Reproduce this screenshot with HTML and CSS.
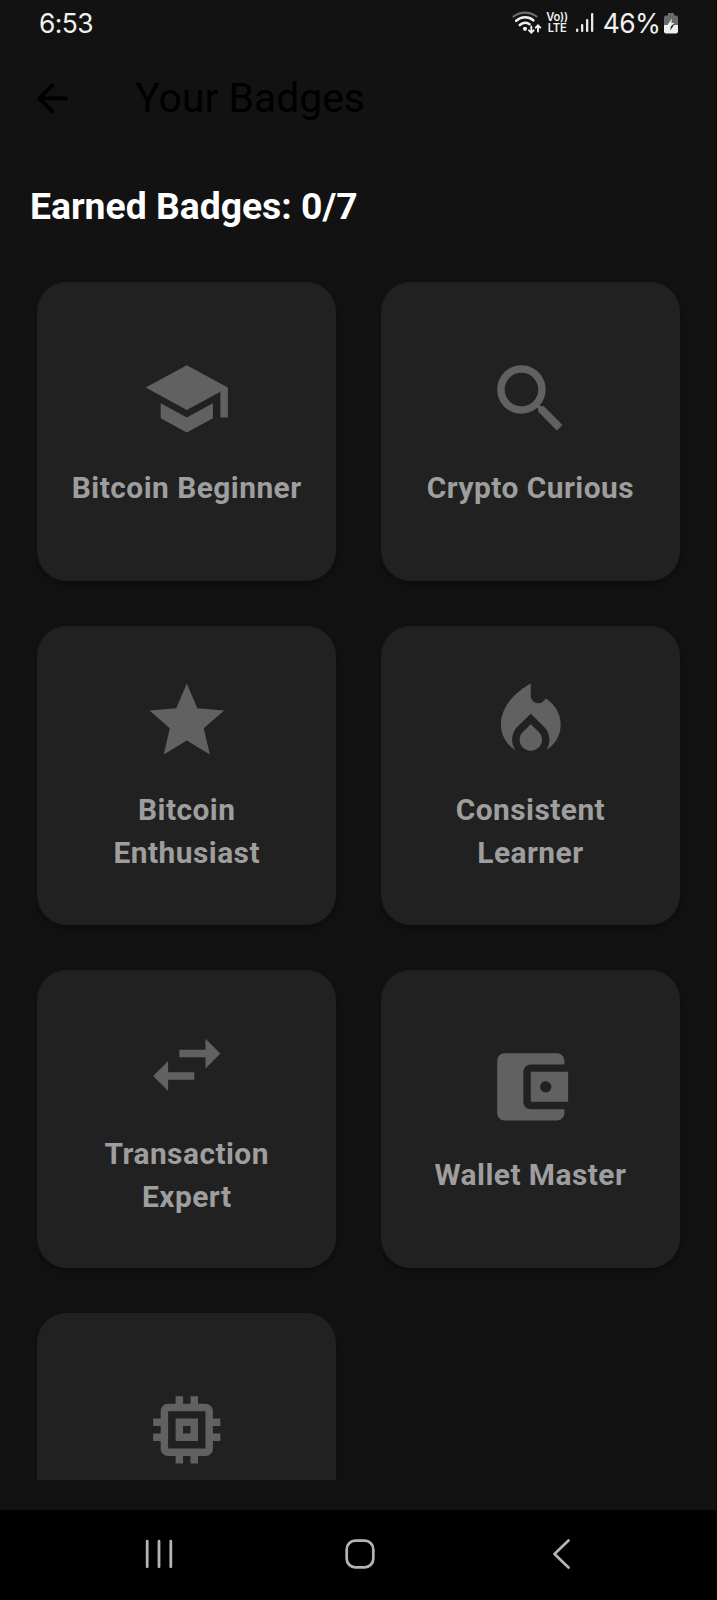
FILE: index.html
```html
<!DOCTYPE html>
<html lang="en">
<head>
<meta charset="utf-8">
<title>Your Badges</title>
<link rel="stylesheet" href="styles.css">
</head>
<body>
<div class="screen">
  <div class="status">
    <span class="clock">6:53</span>
    <div class="indicators">
      <svg class="wifi" width="30" height="24" viewBox="0 0 30 24" fill="none" stroke-linecap="round">
        <path d="M1.500 5.500C8 .2 18 .2 24.500 5.500" stroke="#6e6e6e" stroke-width="2.200"/>
        <path d="M4.200 9.800C9.500 5.200 16.500 5.200 21.300 9.300" stroke="#eee" stroke-width="2.600"/>
        <path d="M7.800 14C11 11.200 15 11.200 17.500 13.200" stroke="#eee" stroke-width="2.600"/>
        <circle cx="13" cy="17.800" r="2.100" fill="#eee"/>
        <path d="M19.300 15.500v6M17 19.300l2.300 2.300 2.300-2.300M26 20.500v-6M23.700 16.700l2.300-2.300 2.300 2.300" stroke="#eee" stroke-width="1.900"/>
      </svg>
      <div class="volte"><span>Vo))</span><span>LTE</span></div>
      <svg class="signal" width="20" height="20" viewBox="0 0 20 20" fill="#e8e8e8">
        <rect x="1" y="15.500" width="2.300" height="3.500" rx="1"/>
        <rect x="6" y="11" width="2.300" height="8" rx="1"/>
        <rect x="11" y="6" width="2.300" height="13" rx="1"/>
        <rect x="16" y="0" width="2.300" height="19" rx="1"/>
      </svg>
      <span class="percent">46%</span>
      <svg class="battery" width="14" height="21" viewBox="0 0 14 21">
        <path d="M4 0h6v2.500h2a2 2 0 0 1 2 2V12H0V4.500a2 2 0 0 1 2-2h2z" fill="#6a6a6a"/>
        <path d="M0 12h14v6.500a2 2 0 0 1-2 2H2a2 2 0 0 1-2-2z" fill="#efefef"/>
        <path d="M8 5.500 3.500 12H7z" fill="#efefef"/>
        <path d="M10.500 11.200 6.200 17.500 7 12.700z" fill="#222"/>
        <path d="M7 10h3.500L7 13z" fill="#efefef"/>
      </svg>
    </div>
  </div>

  <header class="appbar">
    <svg class="back" viewBox="0 0 24 24" fill="none" stroke="#000" stroke-width="2" stroke-linecap="round" stroke-linejoin="round"><path d="M19.300 12H5M12 5 5 12l7 7"/></svg>
    <h1 class="title">Your Badges</h1>
  </header>

  <main class="content">
    <h2 class="earned">Earned Badges: 0/7</h2>
    <div class="grid">
      <div class="card">
        <svg class="icon" viewBox="0 0 24 24"><path d="M5 13.180v4L12 21l7-3.820v-4L12 17l-7-3.820zM12 3 1 9l11 6 9-4.910V17h2V9L12 3z"/></svg>
        <div class="label">Bitcoin Beginner</div>
      </div>
      <div class="card">
        <svg class="icon" viewBox="0 0 24 24"><path d="M15.500 14h-.79l-.28-.27C15.410 12.590 16 11.110 16 9.500 16 5.910 13.090 3 9.500 3S3 5.910 3 9.500 5.910 16 9.500 16c1.610 0 3.090-.59 4.230-1.570l.27.28v.79l5 4.990L20.490 19l-4.990-5zm-6 0C7.010 14 5 11.990 5 9.500S7.010 5 9.500 5 14 7.010 14 9.500 11.990 14 9.500 14z"/></svg>
        <div class="label">Crypto Curious</div>
      </div>
      <div class="card">
        <svg class="icon" viewBox="0 0 24 24"><path d="M12 17.270 18.180 21l-1.640-7.030L22 9.240l-7.190-.61L12 2 9.190 8.630 2 9.240l5.460 4.730L5.820 21z"/></svg>
        <div class="label">Bitcoin<br>Enthusiast</div>
      </div>
      <div class="card">
        <svg class="icon" viewBox="0 0 24 24"><path d="M12 12.900l-2.130 2.090C9.310 15.550 9 16.280 9 17.060 9 18.680 10.350 20 12 20s3-1.320 3-2.940c0-.78-.31-1.520-.87-2.070L12 12.900z"/><path d="M16 6l-.44.55C14.380 8.020 12 7.190 12 5.300V2S4 6 4 13c0 2.920 1.560 5.470 3.890 6.860-.56-.79-.89-1.760-.89-2.800 0-1.320.52-2.560 1.470-3.500L12 10.100l3.530 3.470c.95.93 1.470 2.170 1.470 3.500 0 1.020-.31 1.960-.85 2.750 1.890-1.150 3.290-3.060 3.710-5.300.66-3.550-1.070-6.900-3.860-8.520z"/></svg>
        <div class="label">Consistent<br>Learner</div>
      </div>
      <div class="card">
        <svg class="icon" viewBox="0 0 24 24"><path d="M6.990 11 3 15l3.990 4v-3H14v-2H6.990v-3zM21 9l-3.990-4v3H10v2h7.010v3L21 9z"/></svg>
        <div class="label">Transaction<br>Expert</div>
      </div>
      <div class="card">
        <svg class="icon" viewBox="0 0 24 24"><path d="M21 18v1c0 1.100-.9 2-2 2H5c-1.110 0-2-.9-2-2V5c0-1.100.89-2 2-2h14c1.100 0 2 .9 2 2v1h-9c-1.110 0-2 .9-2 2v8c0 1.100.89 2 2 2h9zm-9-2h10V8H12v8zm4-2.500c-.83 0-1.500-.67-1.500-1.500s.67-1.500 1.500-1.500 1.500.67 1.500 1.500-.67 1.500-1.500 1.500z"/></svg>
        <div class="label">Wallet Master</div>
      </div>
      <div class="card">
        <svg class="icon" viewBox="0 0 24 24"><path d="M15 9H9v6h6V9zm-2 4h-2v-2h2v2zm8-2V9h-2V7c0-1.100-.9-2-2-2h-2V3h-2v2h-2V3H9v2H7c-1.100 0-2 .9-2 2v2H3v2h2v2H3v2h2v2c0 1.100.9 2 2 2h2v2h2v-2h2v2h2v-2h2c1.100 0 2-.9 2-2v-2h2v-2h-2v-2h2zm-4 6H7V7h10v10z"/></svg>
        <div class="label"></div>
      </div>
    </div>
  </main>

  <nav class="navbar">
    <svg width="30" height="30" viewBox="0 0 30 30" stroke="#b4b4b4" stroke-width="2.800" stroke-linecap="round"><path d="M3.200 2.200v25.600M15 2.200v25.600M26.800 2.200v25.600"/></svg>
    <svg width="30" height="30" viewBox="0 0 30 30" fill="none" stroke="#b4b4b4" stroke-width="2.700"><rect x="1.700" y="1.700" width="26.600" height="26.600" rx="8.500"/></svg>
    <svg width="30" height="30" viewBox="0 0 30 30" fill="none" stroke="#b4b4b4" stroke-width="2.700" stroke-linecap="round" stroke-linejoin="round"><path d="M23.500 1.500 9.500 15l14 13.500"/></svg>
  </nav>
</div>
</body>
</html>
```
FILE: styles.css
```css
* { box-sizing: border-box; margin: 0; padding: 0; }

body {
  background: #121212;
  font-family: Roboto, "Liberation Sans", sans-serif;
}

svg { display: block; flex: none; }

.screen {
  width: 717px;
  height: 1600px;
  display: flex;
  flex-direction: column;
  overflow: hidden;
  background: #121212;
  border-right: 1px solid #060606;
}

.status {
  height: 46px;
  flex: none;
  display: flex;
  align-items: center;
  justify-content: space-between;
  padding: 0 38px 0 39px;
  font-family: Inter, Roboto, sans-serif;
  color: #f0f0f0;
}

.clock { font-size: 26.400px; line-height: 32px; letter-spacing: -0.600px; }

.indicators { display: flex; align-items: center; }

.volte {
  display: flex;
  flex-direction: column;
  align-items: center;
  width: 21px;
  margin-left: 5px;
  font-size: 11.200px;
  font-weight: 600;
  line-height: 11.500px;
  letter-spacing: -0.200px;
}

.signal { margin-left: 7px; }
.percent { margin-left: 8px; font-size: 26.400px; line-height: 32px; letter-spacing: -0.500px; }
.battery { margin-left: 3.500px; }

.appbar {
  height: 104.500px;
  flex: none;
  display: flex;
  align-items: center;
  gap: 60.500px;
  padding-left: 30px;
}

.back { width: 44.800px; height: 44.800px; }

.title {
  font-size: 40.900px;
  font-weight: 400;
  line-height: 52px;
  color: #000;
}

.content {
  height: 1329.500px;
  flex: none;
  padding: 33.500px 36px 0 37.400px;
  overflow: hidden;
}

.earned {
  margin: 0 0 53.700px -7.400px;
  font-size: 37.300px;
  font-weight: 700;
  line-height: 44.600px;
  color: #fff;
}

.grid {
  display: grid;
  grid-template-columns: repeat(2, 298.700px);
  grid-auto-rows: 298.700px;
  gap: 45px;
}

.card {
  display: flex;
  flex-direction: column;
  align-items: center;
  justify-content: center;
  gap: 22.400px;
  border-radius: 30px;
  background: #212121;
  box-shadow: 0 4px 7px rgba(0, 0, 0, 0.3);
}

.icon { width: 89.600px; height: 89.600px; fill: #616161; }

.label {
  min-height: 43px;
  font-size: 29.900px;
  font-weight: 700;
  line-height: 43px;
  letter-spacing: 0.460px;
  text-align: center;
  color: #9e9e9e;
}

.navbar {
  height: 90px;
  flex: none;
  margin-top: 30px;
  display: flex;
  align-items: center;
  justify-content: space-between;
  padding: 0 141px 2px 144px;
  background: #000;
}
```
